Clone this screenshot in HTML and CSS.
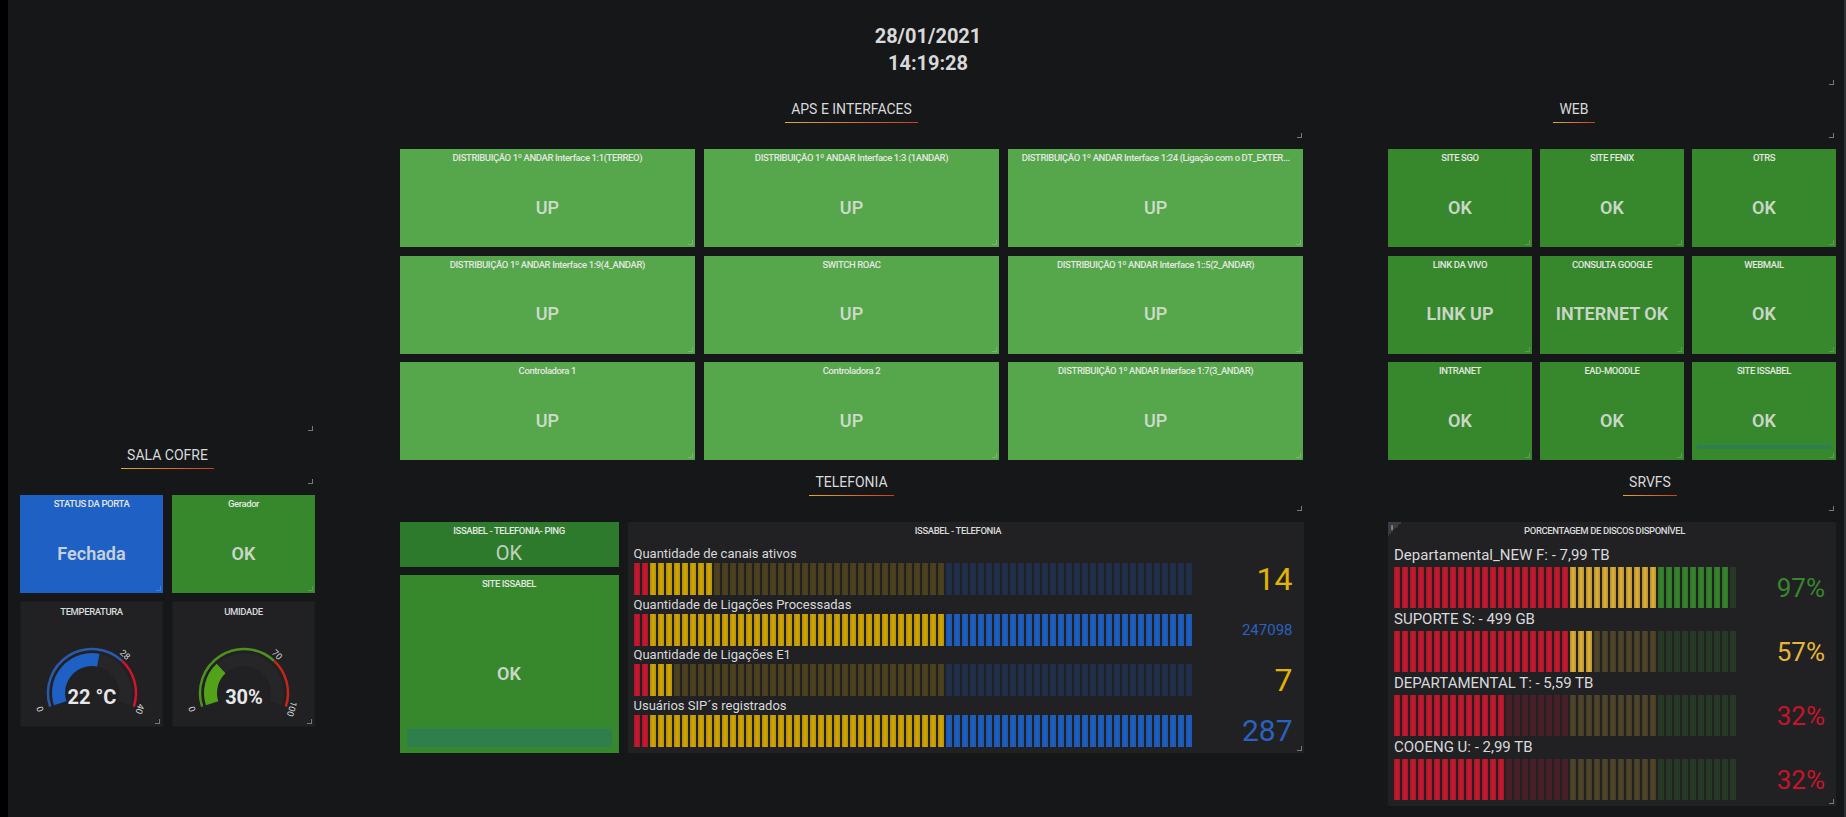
FILE: index.html
```html
<!DOCTYPE html>
<html lang="en">
<head>
    <meta charset="UTF-8">
    <meta name="viewport" content="width=device-width, initial-scale=1.0">
    <title>Painel de monitoramento</title>
    <link rel="stylesheet" href="styles.css">
</head>
<body>
    <main class="dash">
        <header class="clock handle">
            <div>28/01/2021</div>
            <div>14:19:28</div>
        </header>

        <div class="columns">
            <section class="col">
                <div class="spacer handle"></div>
                <h2 class="row-title handle"><span>SALA COFRE</span></h2>
                <div class="grid grid-2">
                    <div class="stat blue handle"><h3>STATUS DA PORTA</h3><p class="big">Fechada</p></div>
                    <div class="stat green handle"><h3>Gerador</h3><p class="big">OK</p></div>
                    <div class="gauge handle">
                        <h3>TEMPERATURA</h3>
                        <svg viewBox="0 0 143 106" width="143" height="106">
                            <path class="track" d="M78.28 39.09A33.5 33.5 0 0 1 103.86 82.35"/>
                            <path class="val-blue" d="M40.14 82.35A33.5 33.5 0 0 1 78.28 39.09"/>
                            <path class="ring ring-blue" d="M30.15 85.6A44 44 0 0 1 102.12 39.92"/>
                            <path class="ring ring-red" d="M102.12 39.92A44 44 0 0 1 113.85 85.6"/>
                            <text class="tick" transform="translate(23 87) rotate(-108)">0</text>
                            <text class="tick" transform="translate(103 36) rotate(43)">28</text>
                            <text class="tick" transform="translate(117 87) rotate(108)">40</text>
                            <text class="gauge-val" x="72" y="83">22 °C</text>
                        </svg>
                    </div>
                    <div class="gauge handle">
                        <h3>UMIDADE</h3>
                        <svg viewBox="0 0 143 106" width="143" height="106">
                            <path class="track" d="M49.07 47.58A33.5 33.5 0 0 1 103.86 82.35"/>
                            <path class="val-green" d="M40.14 82.35A33.5 33.5 0 0 1 49.07 47.58"/>
                            <path class="ring ring-green" d="M30.15 85.6A44 44 0 0 1 102.12 39.92"/>
                            <path class="ring ring-orange" d="M102.12 39.92A44 44 0 0 1 113.85 85.6"/>
                            <text class="tick" transform="translate(23 87) rotate(-108)">0</text>
                            <text class="tick" transform="translate(103 36) rotate(43)">70</text>
                            <text class="tick" transform="translate(117 87) rotate(108)">100</text>
                            <text class="gauge-val" x="72" y="83">30%</text>
                        </svg>
                    </div>
                </div>
            </section>

            <section class="col">
                <h2 class="row-title handle"><span>APS E INTERFACES</span></h2>
                <div class="grid grid-3 rows-98">
                    <div class="stat light handle"><h3>DISTRIBUIÇÃO 1º ANDAR Interface 1:1(TERREO)</h3><p class="big">UP</p></div>
                    <div class="stat light handle"><h3>DISTRIBUIÇÃO 1º ANDAR Interface 1:3 (1ANDAR)</h3><p class="big">UP</p></div>
                    <div class="stat light handle"><h3>DISTRIBUIÇÃO 1º ANDAR Interface 1:24 (Ligação com o DT_EXTER...</h3><p class="big">UP</p></div>
                    <div class="stat light handle"><h3>DISTRIBUIÇÃO 1º ANDAR Interface 1:9(4_ANDAR)</h3><p class="big">UP</p></div>
                    <div class="stat light handle"><h3>SWITCH ROAC</h3><p class="big">UP</p></div>
                    <div class="stat light handle"><h3>DISTRIBUIÇÃO 1º ANDAR Interface 1::5(2_ANDAR)</h3><p class="big">UP</p></div>
                    <div class="stat light handle"><h3>Controladora 1</h3><p class="big">UP</p></div>
                    <div class="stat light handle"><h3>Controladora 2</h3><p class="big">UP</p></div>
                    <div class="stat light handle"><h3>DISTRIBUIÇÃO 1º ANDAR Interface 1:7(3_ANDAR)</h3><p class="big">UP</p></div>
                </div>

                <h2 class="row-title handle"><span>TELEFONIA</span></h2>
                <div class="phones">
                    <div class="phones-left">
                        <div class="stat ping"><h3>ISSABEL - TELEFONIA- PING</h3><p class="ping-val">OK</p></div>
                        <div class="stat green grow">
                            <h3>SITE ISSABEL</h3>
                            <p class="big">OK</p>
                            <div class="spark spark-tall"></div>
                        </div>
                    </div>
                    <div class="bars phone-bars handle">
                        <h3>ISSABEL - TELEFONIA</h3>
                        <div class="bar-row">
                            <div class="bar-label">Quantidade de canais ativos</div>
                            <div class="bar-line">
                                <div class="bar">
                                    <i class="seg red" style="width:16px"></i>
                                    <i class="seg amber" style="width:64px"></i>
                                    <i class="seg amber off" style="width:232px"></i>
                                    <i class="seg blue-seg off" style="width:248px"></i>
                                </div>
                                <b class="bar-val c-amber">14</b>
                            </div>
                        </div>
                        <div class="bar-row">
                            <div class="bar-label">Quantidade de Ligações Processadas</div>
                            <div class="bar-line">
                                <div class="bar">
                                    <i class="seg red" style="width:16px"></i>
                                    <i class="seg amber" style="width:296px"></i>
                                    <i class="seg blue-seg" style="width:248px"></i>
                                </div>
                                <b class="bar-val c-blue small">247098</b>
                            </div>
                        </div>
                        <div class="bar-row">
                            <div class="bar-label">Quantidade de Ligações E1</div>
                            <div class="bar-line">
                                <div class="bar">
                                    <i class="seg red" style="width:16px"></i>
                                    <i class="seg amber" style="width:24px"></i>
                                    <i class="seg amber off" style="width:272px"></i>
                                    <i class="seg blue-seg off" style="width:248px"></i>
                                </div>
                                <b class="bar-val c-amber">7</b>
                            </div>
                        </div>
                        <div class="bar-row">
                            <div class="bar-label">Usuários SIP´s registrados</div>
                            <div class="bar-line">
                                <div class="bar">
                                    <i class="seg red" style="width:16px"></i>
                                    <i class="seg amber" style="width:296px"></i>
                                    <i class="seg blue-seg" style="width:248px"></i>
                                </div>
                                <b class="bar-val c-blue mid">287</b>
                            </div>
                        </div>
                    </div>
                </div>
            </section>

            <section class="col">
                <h2 class="row-title web-title handle"><span>WEB</span></h2>
                <div class="grid grid-3 rows-98 web-grid">
                    <div class="stat green handle"><h3>SITE SGO</h3><p class="big">OK</p></div>
                    <div class="stat green handle"><h3>SITE FENIX</h3><p class="big">OK</p></div>
                    <div class="stat green handle"><h3>OTRS</h3><p class="big">OK</p></div>
                    <div class="stat green handle"><h3>LINK DA VIVO</h3><p class="big">LINK UP</p></div>
                    <div class="stat green handle"><h3>CONSULTA GOOGLE</h3><p class="big">INTERNET OK</p></div>
                    <div class="stat green handle"><h3>WEBMAIL</h3><p class="big">OK</p></div>
                    <div class="stat green handle"><h3>INTRANET</h3><p class="big">OK</p></div>
                    <div class="stat green handle"><h3>EAD-MOODLE</h3><p class="big">OK</p></div>
                    <div class="stat green handle"><h3>SITE ISSABEL</h3><p class="big">OK</p><div class="spark spark-low"></div></div>
                </div>

                <h2 class="row-title srv-title handle"><span>SRVFS</span></h2>
                <div class="bars disk-bars handle">
                    <span class="info-corner">i</span>
                    <h3>PORCENTAGEM DE DISCOS DISPONÍVEL</h3>
                    <div class="bar-row">
                        <div class="bar-label">Departamental_NEW F: - 7,99 TB</div>
                        <div class="bar-line">
                            <div class="bar">
                                <i class="seg red" style="width:176px"></i>
                                <i class="seg gold" style="width:88px"></i>
                                <i class="seg green-seg" style="width:72px"></i>
                                <i class="seg green-seg off" style="width:8px"></i>
                            </div>
                            <b class="bar-val c-green">97%</b>
                        </div>
                    </div>
                    <div class="bar-row">
                        <div class="bar-label">SUPORTE S: - 499 GB</div>
                        <div class="bar-line">
                            <div class="bar">
                                <i class="seg red" style="width:176px"></i>
                                <i class="seg gold" style="width:24px"></i>
                                <i class="seg gold off" style="width:64px"></i>
                                <i class="seg green-seg off" style="width:80px"></i>
                            </div>
                            <b class="bar-val c-gold">57%</b>
                        </div>
                    </div>
                    <div class="bar-row">
                        <div class="bar-label">DEPARTAMENTAL T: - 5,59 TB</div>
                        <div class="bar-line">
                            <div class="bar">
                                <i class="seg red" style="width:112px"></i>
                                <i class="seg red off" style="width:64px"></i>
                                <i class="seg gold off" style="width:88px"></i>
                                <i class="seg green-seg off" style="width:80px"></i>
                            </div>
                            <b class="bar-val c-red">32%</b>
                        </div>
                    </div>
                    <div class="bar-row">
                        <div class="bar-label">COOENG U: - 2,99 TB</div>
                        <div class="bar-line">
                            <div class="bar">
                                <i class="seg red" style="width:112px"></i>
                                <i class="seg red off" style="width:64px"></i>
                                <i class="seg gold off" style="width:88px"></i>
                                <i class="seg green-seg off" style="width:80px"></i>
                            </div>
                            <b class="bar-val c-red">32%</b>
                        </div>
                    </div>
                </div>
            </section>
        </div>
    </main>
</body>
</html>
```

FILE: styles.css
```css
* {
    box-sizing: border-box;
}
html, body {
    height: 100%;
}
body {
    margin: 0;
    overflow: hidden;
    background: #161719;
    border-left: 8px solid #000;
    border-right: 2px solid #2e3138;
    color: #d8d9da;
    font-family: Roboto, "Liberation Sans", sans-serif;
}
h2, h3, p {
    margin: 0;
}
.dash {
    width: 1828px;
    padding-left: 12px;
}

/* the little resize corner grafana leaves on each panel */
.handle {
    position: relative;
}
.handle::after {
    content: "";
    position: absolute;
    right: 2px;
    bottom: 2px;
    width: 4px;
    height: 4px;
    border-right: 1px solid #77787a;
    border-bottom: 1px solid #77787a;
}

.clock {
    height: 87px;
    padding-top: 23px;
    font-size: 20px;
    font-weight: 700;
    line-height: 27px;
    text-align: center;
}

.columns {
    display: grid;
    grid-template-columns: 295px 904px 448px;
    justify-content: space-between;
}
.spacer {
    height: 346px;
}

.row-title {
    height: 53px;
    margin-bottom: 9px;
    padding-top: 14px;
    font-size: 14px;
    font-weight: 400;
    line-height: 16px;
    text-align: center;
}
.row-title span {
    display: inline-block;
    padding: 0 6px 5px;
    border-bottom: 1px solid;
    border-image: linear-gradient(90deg, #e0a92e, #c8401e) 1;
}
.web-title {
    padding-right: 76px;
}
.srv-title {
    padding-left: 76px;
}

.grid {
    display: grid;
    gap: 8px 9px;
}
.grid-2 {
    grid-template-columns: 143px 143px;
    grid-template-rows: 98px 126px;
}
.grid-3 {
    grid-template-columns: repeat(3, 1fr);
}
.rows-98 {
    grid-auto-rows: 98px;
    gap: 8.5px;
}
.web-grid {
    column-gap: 8px;
}

.stat {
    position: relative;
    display: flex;
    flex-direction: column;
    color: #e2e6e0;
}
h3 {
    height: 18px;
    font-size: 9.5px;
    font-weight: 500;
    line-height: 17px;
    text-align: center;
    white-space: nowrap;
    overflow: hidden;
    letter-spacing: -0.4px;
}
.big {
    flex: 1;
    display: flex;
    align-items: center;
    justify-content: center;
    font-size: 18px;
    font-weight: 600;
    opacity: 0.85;
}
.light {
    background: #56a64b;
}
.light .big {
    font-weight: 500;
}
.green {
    background: #37872d;
}
.blue {
    background: #1f60c4;
}
.ping {
    height: 45px;
    background: #2e7a2c;
}
.ping-val {
    font-size: 20px;
    line-height: 27px;
    text-align: center;
    opacity: 0.8;
}
.handle.stat::after {
    border-color: rgba(255, 255, 255, 0.18);
}

.spark {
    position: absolute;
    background: #2f7f4c;
    border-top: 1px solid #2c7a68;
}
.spark-tall {
    left: 7px;
    right: 7px;
    bottom: 6px;
    height: 18px;
}
.spark-low {
    left: 5px;
    right: 5px;
    bottom: 11px;
    height: 4px;
}

.gauge {
    background: #212124;
    border: 1px solid #1c1c1f;
}
.gauge h3 {
    height: 19px;
    line-height: 19px;
}
.gauge svg {
    display: block;
    margin-left: -1px;
}
.gauge path {
    fill: none;
}
.track {
    stroke: #262629;
    stroke-width: 13;
}
.val-blue {
    stroke: #1f60c4;
    stroke-width: 13;
}
.val-green {
    stroke: #52a31a;
    stroke-width: 13;
}
.ring {
    stroke-width: 2.5;
}
.ring-blue {
    stroke: #2b5ba8;
}
.ring-red {
    stroke: #d0142a;
}
.ring-green {
    stroke: #4f8f20;
}
.ring-orange {
    stroke: #c4261a;
}
.tick {
    fill: #d8d9da;
    font-size: 9px;
    text-anchor: middle;
}
.gauge-val {
    fill: #e6e7e8;
    font-size: 20px;
    font-weight: 700;
    text-anchor: middle;
}

.phones {
    display: grid;
    grid-template-columns: 219px 676px;
    gap: 9px;
    height: 231px;
}
.phones-left {
    display: flex;
    flex-direction: column;
    gap: 8px;
}
.grow {
    flex: 1;
}

.bars {
    background: #212124;
    padding: 0 11px 0 6px;
}
.bars h3 {
    padding-right: 10px;
}
.phone-bars h3 {
    height: 22px;
}
.disk-bars {
    height: 284px;
}
.disk-bars h3 {
    height: 22px;
}
.info-corner {
    position: absolute;
    top: 0;
    left: 0;
    width: 14px;
    height: 14px;
    padding-left: 3px;
    background: linear-gradient(135deg, #3a3c40 50%, transparent 50%);
    font-size: 8px;
    line-height: 11px;
}

.bar-row {
    display: flex;
    flex-direction: column;
}
.phone-bars .bar-row {
    height: 50.67px;
}
.bar-label {
    height: 19px;
    font-size: 13px;
    line-height: 19px;
    white-space: nowrap;
}
.disk-bars .bar-label {
    height: 23px;
    font-size: 15px;
    line-height: 23px;
}
.bar-line {
    display: flex;
    align-items: center;
    justify-content: space-between;
}
.bar {
    display: flex;
    height: 32px;
}
.disk-bars .bar {
    height: 41px;
}
.bar-val {
    font-size: 32px;
    font-weight: 400;
    line-height: 32px;
}
.bar-val.small {
    font-size: 15px;
}
.bar-val.mid {
    font-size: 30px;
}
.disk-bars .bar-val {
    font-size: 26px;
}

/* one cell every 8px: colour lighter in its middle, then a gap */
.seg {
    display: block;
    height: 100%;
    background-size: 8px 100%;
    background-repeat: repeat-x;
}
.seg.off {
    opacity: 0.25;
}
.red {
    background-image: linear-gradient(90deg, #a81428 0, #c81a30 3px, #a81428 6.5px, transparent 6.5px);
}
.amber {
    background-image: linear-gradient(90deg, #b08c08 0, #d4a800 3px, #b08c08 6.5px, transparent 6.5px);
}
.gold {
    background-image: linear-gradient(90deg, #b08a2a 0, #e0b23a 3px, #b08a2a 6.5px, transparent 6.5px);
}
.blue-seg {
    background-image: linear-gradient(90deg, #1c55ac 0, #1f60c4 3px, #1c55ac 6.5px, transparent 6.5px);
}
.green-seg {
    background-image: linear-gradient(90deg, #2d7325 0, #37872d 3px, #2d7325 6.5px, transparent 6.5px);
}
.c-amber {
    color: #e0b400;
}
.c-blue {
    color: #2a62bd;
}
.c-green {
    color: #37872d;
}
.c-gold {
    color: #e6b63a;
}
.c-red {
    color: #c4162a;
}
```
